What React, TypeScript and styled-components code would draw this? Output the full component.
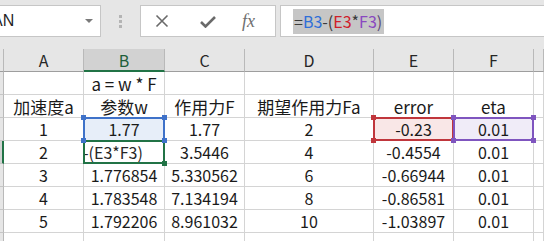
import React from "react";
import styled, { createGlobalStyle } from "styled-components";

const Global = createGlobalStyle`
  html, body { margin: 0; padding: 0; background: #ffffff; overflow: hidden; }
  body { font-family: "Noto Sans CJK SC", "Noto Sans", sans-serif; }
`;

const Page = styled.div`
  width: 544px;
  height: 241px;
  overflow: hidden;
  background: #e6e6e6;
`;

const TopBar = styled.div`
  height: 49px;
  display: flex;
  align-items: flex-start;
  padding-top: 5px;
  box-sizing: border-box;
  margin-left: -2px;
`;

const NameBox = styled.div`
  width: 103px;
  height: 32px;
  box-sizing: border-box;
  background: #fff;
  border: 1px solid #c6c6c6;
  display: flex;
  align-items: center;
  justify-content: space-between;
  padding-right: 7px;
  overflow: hidden;
  font-family: "Liberation Sans", sans-serif;
  font-size: 16px;
  color: #1f1f1f;
`;

const NameText = styled.span`
  margin-left: -7px;
`;

const Caret = styled.span`
  width: 0;
  height: 0;
  border-left: 4px solid transparent;
  border-right: 4px solid transparent;
  border-top: 4px solid #7a7a7a;
`;

const Grip = styled.div`
  width: 39px;
  height: 32px;
  display: flex;
  flex-direction: column;
  align-items: center;
  justify-content: center;
  gap: 2px;
`;

const GripDot = styled.span`
  width: 3px;
  height: 3px;
  background: #b4b4b4;
`;

const IconBox = styled.div`
  width: 136px;
  height: 32px;
  box-sizing: border-box;
  background: #fff;
  border: 1px solid #c6c6c6;
  display: flex;
  align-items: center;
  padding-left: 14px;
`;

const IconSlot = styled.span<{ $gap: number }>`
  display: flex;
  align-items: center;
  margin-left: ${(p) => p.$gap}px;
`;

const FxText = styled.span`
  font-family: "Liberation Serif", serif;
  font-style: italic;
  font-size: 18px;
  color: #6f6f6f;
`;

const FormulaBox = styled.div`
  flex: 1;
  margin-left: 4px;
  height: 32px;
  box-sizing: border-box;
  background: #fff;
  border: 1px solid #c6c6c6;
  border-right: none;
  display: flex;
  align-items: center;
  padding-left: 12px;
`;

const Selected = styled.span`
  background: #c6c6c6;
  font-family: "Noto Sans CJK SC", sans-serif;
  font-size: 16px;
  line-height: 25px;
  height: 25px;
  padding: 0 2px 0 1px;
`;

const Tok = styled.span<{ $c: string }>`
  color: ${(p) => p.$c};
`;

const Sheet = styled.div`
  display: grid;
  grid-template-columns: 4px 80px 81px 80px 129px 80px 80px 1fr;
  grid-auto-rows: 23px;
  background: #fff;
`;

const Cell = styled.div<{ $align?: string; $bg?: string; $size?: number }>`
  position: relative;
  box-sizing: border-box;
  border-right: 1px solid #d4d4d4;
  border-bottom: 1px solid #d4d4d4;
  background: ${(p) => p.$bg || "#fff"};
  display: flex;
  align-items: center;
  justify-content: ${(p) => p.$align || "center"};
  font-size: ${(p) => p.$size || 16}px;
  color: #1a1a1a;
  white-space: nowrap;
  overflow: visible;
`;

const HeadCell = styled.div<{ $sel?: boolean }>`
  position: relative;
  box-sizing: border-box;
  background: ${(p) => (p.$sel ? "#d2d2d2" : "#e6e6e6")};
  border-right: 1px solid #b9b9b9;
  border-bottom: ${(p) => (p.$sel ? "2px solid #217346" : "1px solid #9e9e9e")};
  display: flex;
  align-items: center;
  justify-content: center;
  font-size: 16px;
  color: ${(p) => (p.$sel ? "#1e5e3a" : "#262626")};
`;

const RowHead = styled.div<{ $sel?: boolean }>`
  box-sizing: border-box;
  background: ${(p) => (p.$sel ? "#d2d2d2" : "#e6e6e6")};
  border-right: ${(p) => (p.$sel ? "2px solid #217346" : "1px solid #b9b9b9")};
  border-bottom: 1px solid #c6c6c6;
`;

const EditClip = styled.div`
  overflow: hidden;
  width: 100%;
`;

const EditText = styled.span`
  display: inline-block;
  margin-left: -1px;
  color: #262626;
`;

const Range = styled.div<{ $c: string; $noBottom?: boolean }>`
  position: absolute;
  left: -1px;
  top: -1px;
  right: -1px;
  bottom: -1px;
  border: 2px solid ${(p) => p.$c};
  ${(p) => (p.$noBottom ? "border-bottom: none;" : "")}
  pointer-events: none;
  z-index: 2;
`;

const Handle = styled.span<{ $c: string; $x: "l" | "r"; $y: "t" | "b" }>`
  position: absolute;
  width: 5px;
  height: 5px;
  background: ${(p) => p.$c};
  ${(p) => (p.$x === "l" ? "left: -3px;" : "right: -3px;")}
  ${(p) => (p.$y === "t" ? "top: -3px;" : "bottom: -3px;")}
  z-index: 3;
`;

const BLUE = "#3f72c9";
const RED = "#c0363c";
const PURPLE = "#7f55bf";
const GREEN = "#217346";

type Corner = ["l" | "r", "t" | "b"];

const Handles = ({ c, only }: { c: string; only?: Corner[] }) => {
  const all: Corner[] = only || [
    ["l", "t"],
    ["r", "t"],
    ["l", "b"],
    ["r", "b"],
  ];
  return (
    <>
      {all.map(([x, y]) => (
        <Handle key={x + y} $c={c} $x={x} $y={y} />
      ))}
    </>
  );
};

const cols = ["A", "B", "C", "D", "E", "F"];

const data: string[][] = [
  ["", "a = w * F", "", "", "", ""],
  ["加速度a", "参数w", "作用力F", "期望作用力Fa", "error", "eta"],
  ["1", "1.77", "1.77", "2", "-0.23", "0.01"],
  ["2", "EDIT", "3.5446", "4", "-0.4554", "0.01"],
  ["3", "1.776854", "5.330562", "6", "-0.66944", "0.01"],
  ["4", "1.783548", "7.134194", "8", "-0.86581", "0.01"],
  ["5", "1.792206", "8.961032", "10", "-1.03897", "0.01"],
  ["", "", "", "", "", ""],
];

export default function App() {
  return (
    <Page>
      <Global />
      <TopBar>
        <NameBox>
          <NameText>AN</NameText>
          <Caret />
        </NameBox>
        <Grip>
          <GripDot />
          <GripDot />
          <GripDot />
        </Grip>
        <IconBox>
          <IconSlot $gap={0}>
            <svg width="14" height="14" viewBox="0 0 14 14">
              <path d="M1.5 1.5 L12.5 12.5 M12.5 1.5 L1.5 12.5" stroke="#6a6a6a" strokeWidth="1.6" fill="none" />
            </svg>
          </IconSlot>
          <IconSlot $gap={31}>
            <svg width="16" height="13" viewBox="0 0 16 13">
              <path d="M1 7 L5.5 11.5 L15 2" stroke="#6a6a6a" strokeWidth="2.6" fill="none" />
            </svg>
          </IconSlot>
          <IconSlot $gap={26}>
            <FxText>fx</FxText>
          </IconSlot>
        </IconBox>
        <FormulaBox>
          <Selected>
            <Tok $c="#3a3a3a">=</Tok>
            <Tok $c="#2f6fd8">B3</Tok>
            <Tok $c="#3a3a3a">-(</Tok>
            <Tok $c="#d0202a">E3</Tok>
            <Tok $c="#3a3a3a">*</Tok>
            <Tok $c="#8a48c0">F3</Tok>
            <Tok $c="#5a4a7a">)</Tok>
          </Selected>
        </FormulaBox>
      </TopBar>
      <Sheet>
        <HeadCell />
        {cols.map((c) => (
          <HeadCell key={c} $sel={c === "B"}>
            {c}
          </HeadCell>
        ))}
        <HeadCell />
        {data.map((row, r) => (
          <React.Fragment key={r}>
            <RowHead $sel={r === 3} />
            {row.map((v, ci) => {
              if (r === 2 && ci === 1)
                return (
                  <Cell key={ci} $bg="#e7eef9">
                    {v}
                    <Range $c={BLUE} $noBottom />
                    <Handles c={BLUE} />
                  </Cell>
                );
              if (r === 2 && ci === 4)
                return (
                  <Cell key={ci} $bg="#f9e7e7">
                    {v}
                    <Range $c={RED} />
                    <Handles c={RED} />
                  </Cell>
                );
              if (r === 2 && ci === 5)
                return (
                  <Cell key={ci} $bg="#f0ecf8">
                    {v}
                    <Range $c={PURPLE} />
                    <Handles c={PURPLE} />
                  </Cell>
                );
              if (v === "EDIT")
                return (
                  <Cell key={ci} $align="flex-start">
                    <EditClip>
                      <EditText>-(E3*F3)</EditText>
                    </EditClip>
                    <Range $c={GREEN} />
                    <Handles c={GREEN} only={[["r", "b"]]} />
                  </Cell>
                );
              return (
                <Cell key={ci} $size={r < 2 ? 17 : 16}>
                  {v}
                </Cell>
              );
            })}
            <Cell />
          </React.Fragment>
        ))}
      </Sheet>
    </Page>
  );
}
